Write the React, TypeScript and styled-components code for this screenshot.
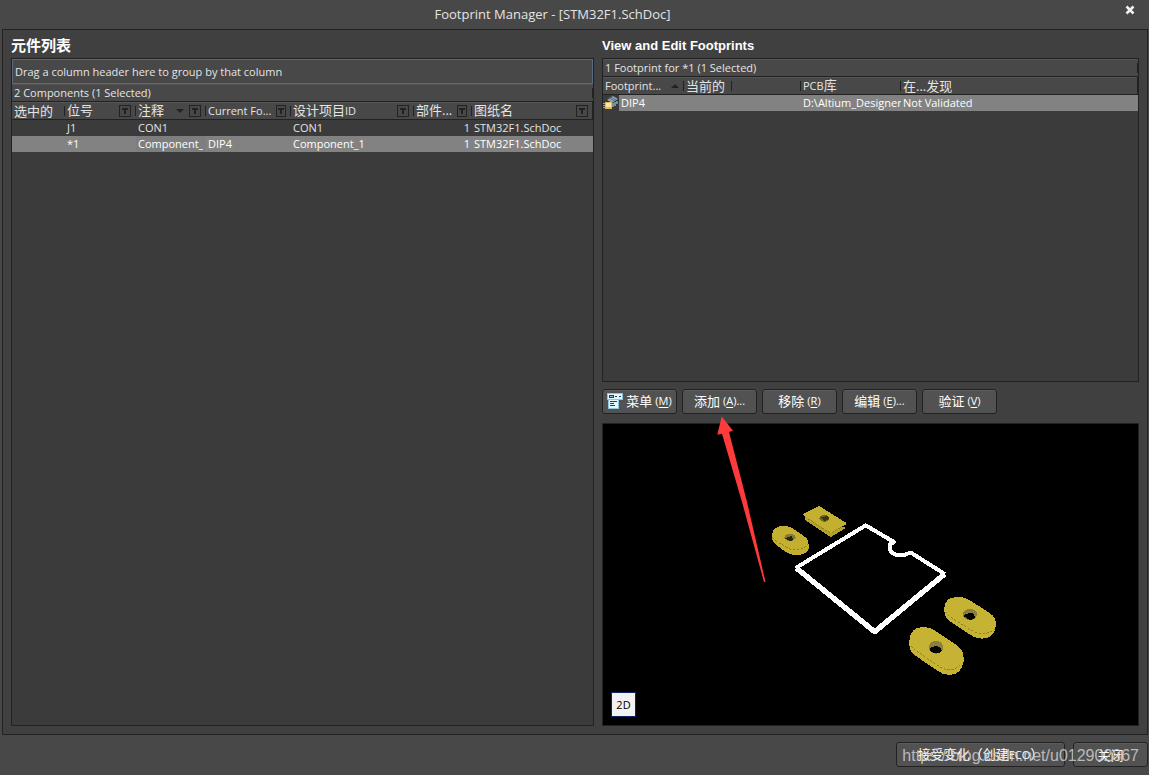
import React from "react";
import styled, { createGlobalStyle } from "styled-components";

const LINE = "#222222";
const UI = `"Open Sans", "Noto Sans CJK SC", sans-serif`;

const GlobalStyle = createGlobalStyle`
  *, *::before, *::after { box-sizing: border-box; }
  body {
    margin: 0;
    background: #484848;
    color: #e4e4e4;
    font-family: ${UI};
    font-size: 11px;
    line-height: 16px;
  }
  button { font: inherit; color: inherit; padding: 0; }
  u { text-underline-offset: 2px; }
`;

const Dialog = styled.div`
  position: relative;
  display: flex;
  flex-direction: column;
  min-height: 100vh;
`;

const TitleBar = styled.header`
  display: grid;
  grid-template-columns: 36px 1fr 38px;
  align-items: center;
  height: 29px;
  padding-bottom: 2px;
`;

const Title = styled.h1`
  margin: 0;
  padding-right: 42px;
  text-align: center;
  font-size: 13px;
  font-weight: 400;
  line-height: 18px;
`;

const CloseButton = styled.button`
  display: flex;
  align-items: center;
  justify-content: center;
  height: 20px;
  margin-bottom: 8px;
  border: 0;
  background: none;
`;

const Body = styled.main`
  flex: 1;
  display: grid;
  grid-template-columns: 583fr 537fr;
  gap: 8px;
  margin: 0 1px 0 2px;
  padding: 8px;
  border: 1px solid ${LINE};
  background: #404040;
`;

const Column = styled.section`
  display: flex;
  flex-direction: column;
  min-width: 0;
`;

const Heading = styled.h2<{ $han?: boolean }>`
  margin: 0 0 4px;
  font-family: "Liberation Sans", "Noto Sans CJK SC", sans-serif;
  font-size: ${(p) => (p.$han ? 15 : 13)}px;
  font-weight: 700;
  line-height: 16px;
  color: #ffffff;
`;

const Panel = styled.div<{ $grow: number }>`
  flex: ${(p) => p.$grow} 1 0;
  border: 1px solid ${LINE};
  background: #3b3b3b;
`;

const GroupBox = styled.div`
  height: 25px;
  padding: 4px 2px;
  border: 1px solid #586a80;
  background: #484848;
`;

const Summary = styled.div`
  height: 17px;
  padding-left: 2px;
  border-top: 1px solid #555555;
  background: linear-gradient(${LINE}, ${LINE}) no-repeat right center / 1px 10px, #484848;
`;

const Grid = styled.table`
  width: 100%;
  table-layout: fixed;
  border-collapse: separate;
  border-spacing: 0;
`;

const HeadCell = styled.th<{ $last?: boolean }>`
  height: 19px;
  padding: 0 0 0 2px;
  border-top: 1px solid ${LINE};
  border-bottom: 1px solid ${LINE};
  background: linear-gradient(${LINE}, ${LINE}) no-repeat right center / 1px ${(p) => (p.$last ? "100%" : "10px")},
    linear-gradient(#555555, #555555) no-repeat top / 100% 1px, #484848;
  font-weight: 400;
  text-align: left;
`;

const HeadContent = styled.div`
  display: flex;
  align-items: center;
  gap: 5px;
  height: 17px;
  padding-right: 5px;
  white-space: nowrap;
`;

const HeadLabel = styled.span`
  flex: 1;
`;

const Han = styled.span`
  font-size: 13px;
  font-weight: 400;
`;

const FilterButton = styled.button`
  display: flex;
  align-items: center;
  justify-content: center;
  width: 12px;
  height: 12px;
  margin-top: 1px;
  border: 1px solid ${LINE};
  background: none;
`;

const Row = styled.tr<{ $selected?: boolean }>`
  background: ${(p) => (p.$selected ? "#828282" : "transparent")};
  color: ${(p) => (p.$selected ? "#ffffff" : "#e4e4e4")};
`;

const Cell = styled.td<{ $right?: boolean; $focused?: boolean }>`
  height: 16px;
  padding: 0 ${(p) => (p.$right ? 2 : 0)}px 0 2px;
  overflow: hidden;
  white-space: nowrap;
  line-height: 16px;
  text-align: ${(p) => (p.$right ? "right" : "left")};
  background: ${(p) => (p.$focused ? "#7e7e7e" : "transparent")};
`;

const Clip = styled.div`
  margin-right: 3px;
  overflow: hidden;
`;

const IconCell = styled(Cell)`
  padding: 0;
  background: linear-gradient(#3b3b3b, #3b3b3b) no-repeat left / 16px 100%;
`;

const IconLine = styled.div`
  display: flex;
  gap: 2px;
  height: 16px;
`;

const Toolbar = styled.div`
  display: flex;
  gap: 5px;
  margin: 7px 0 9px;
`;

const PushButton = styled.button<{ $wide?: boolean }>`
  display: flex;
  align-items: center;
  justify-content: center;
  gap: 3px;
  width: ${(p) => (p.$wide ? 169 : 75)}px;
  height: 25px;
  border: 1px solid ${LINE};
  border-radius: 3px;
  background: #525252;
  box-shadow: inset 0 1px #5c5c5c;
  color: #ffffff;
  white-space: nowrap;
`;

const ButtonSlot = styled.div`
  position: relative;
`;

const Pointer = styled.svg`
  position: absolute;
  z-index: 1;
  top: 26px;
  left: 34px;
  pointer-events: none;
`;

const Preview = styled.div`
  position: relative;
  flex: 303 1 0;
  border: 1px solid ${LINE};
  background: #000000;
`;

const Scene = styled.svg`
  position: absolute;
  inset: 0;
  width: 100%;
  height: 100%;
`;

const ViewButton = styled.button`
  position: absolute;
  left: 8px;
  bottom: 8px;
  width: 25px;
  height: 25px;
  border: 1px solid #0a246a;
  background: #f2f2f2;
  color: #000000;
`;

const Footer = styled.footer`
  display: flex;
  justify-content: flex-end;
  gap: 8px;
  padding: 7px 1px 8px;
`;

const Watermark = styled.span`
  position: absolute;
  right: 10px;
  bottom: 9px;
  font-family: "Liberation Sans", sans-serif;
  font-size: 16px;
  line-height: 20px;
  color: rgba(215, 215, 215, 0.8);
  pointer-events: none;
`;

function Filter({ name }: { name: string }) {
  return (
    <FilterButton type="button" aria-label={`Filter ${name}`}>
      <svg width="6" height="6" viewBox="0 0 6 6" shapeRendering="crispEdges">
        <path d="M0 0H6V2H4V6H2V2H0Z" fill={LINE} />
      </svg>
    </FilterButton>
  );
}

function SortMark({ up }: { up?: boolean }) {
  return (
    <svg width="8" height="4" viewBox="0 0 8 4">
      <path d={up ? "M0 4L4 0L8 4Z" : "M0 0H8L4 4Z"} fill={LINE} />
    </svg>
  );
}

function MenuIcon() {
  return (
    <svg width="16" height="16" viewBox="0 0 16 16" shapeRendering="crispEdges">
      <path d="M1 5H12V16H1Z" fill="#8cc4e4" />
      <path d="M2 6H11V15H2Z" fill="#e4f6fc" />
      <path d="M0 0H16V7H0Z" fill="#8cc4e4" />
      <path d="M1 1H15V6H1Z" fill="#e4f6fc" />
      <path d="M2 2H7V5H2ZM8 3H10V4H8ZM12 3H14V4H12ZM3 8H10V9H3ZM3 10H7V11H3ZM3 12H8V13H3Z" fill="#17406e" />
      <path d="M3 3H6V4H3Z" fill="#8cc4e4" />
    </svg>
  );
}

function FootprintIcon() {
  return (
    <svg width="16" height="16" viewBox="0 0 16 16">
      <path d="M3 6L10 1L16 5V8L10 13L3 9Z" fill="#26343f" />
      <path d="M4 5L10 1L15 4L9 8Z" fill="#8fa3b6" />
      <path d="M6 3L12 6M8 2L13 5" stroke="#5f7488" />
      <path d="M10 8V12M12 7V11M14 6V9" stroke="#d4e4ec" />
      <path d="M0 8.500H3M0 10.500H3M0 12.500H3" stroke="#c89c38" />
      <path d="M2 7H9V14H2Z" fill="#e6b84e" />
      <path d="M3 8H8V12H3Z" fill="#ffe8a0" />
    </svg>
  );
}

function Pads() {
  return (
    <Scene viewBox="603 424 535 301" shapeRendering="crispEdges" aria-label="DIP4 footprint preview">
      <g transform="translate(780 490) scale(0.333333)">
        <path d="M75 83L118 60L184 108L198 114L152 141L75 90Z" fill="#b5a22a" />
        <path d="M118 48L198 98V103L152 130L70 76V72Z" fill="#c4b030" />
        <path d="M84 86L152 130L184 111" fill="none" stroke="#756a20" strokeWidth="2" strokeDasharray="8 4" />
        <ellipse cx="133" cy="85" rx="15" ry="10" fill="#706525" />
        <path d="M122 80L133 94L148 86L144 79Z" fill="#3b3510" />

        <path
          d="M-24 133C-22 114 -6 108 12 108C25 108 32 111 40 116L74 140C84 147 87 156 86 175C82 188 68 196 48 195C36 195 29 192 20 187L-12 165C-22 157 -25 146 -24 133Z"
          fill="#c3af30"
        />
        <path d="M-22 142L-12 153L26 176C44 184 68 180 84 163" fill="none" stroke="#756a20" strokeWidth="2" strokeDasharray="8 4" />
        <ellipse cx="30" cy="142" rx="17" ry="11" fill="#857a38" />
        <path d="M15 145C24 154 38 154 40 148L34 138C26 140 20 143 15 145Z" fill="#2b260a" />

        <path
          d="M493 352C493 332 510 321 532 321C549 321 559 324 570 331L628 368C643 379 648 389 648 405C647 430 632 446 606 446C594 446 586 443 577 438L508 393C496 384 492 372 493 352Z"
          fill="#c6b334"
        />
        <path d="M496 365L508 379L578 423C598 435 624 433 645 416" fill="none" stroke="#756a20" strokeWidth="2" strokeDasharray="7 5" />
        <ellipse cx="570" cy="373" rx="21" ry="17" fill="#8a7f3c" />
        <path d="M551 377C557 370 568 367 580 371L586 382C580 392 561 393 551 377Z" fill="#050500" />

        <path
          d="M388 452C388 425 406 411 428 411C446 411 456 416 466 423L529 464C547 477 552 491 551 515C546 541 532 555 508 555C494 555 483 550 472 542L402 494C390 484 387 472 388 452Z"
          fill="#c6b334"
        />
        <path d="M392 468L402 478L472 525C493 542 519 547 545 521" fill="none" stroke="#756a20" strokeWidth="2" strokeDasharray="7 5" />
        <ellipse cx="468" cy="472" rx="22" ry="19" fill="#8a7f3c" />
        <path d="M448 477C455 468 466 466 480 471L485 481C479 493 457 495 448 477Z" fill="#050500" />

        <path
          d="M47 234L257 106L342 156L330 163C325 180 335 196 364 196C380 196 382 188 393 188L494 252"
          fill="none"
          stroke="#ffffff"
          strokeWidth="12"
          strokeLinejoin="round"
        />
        <path d="M49 234L284 425L494 252" fill="none" stroke="#ffffff" strokeWidth="16" strokeLinejoin="round" />
      </g>
    </Scene>
  );
}

const components = [
  { designator: "J1", comment: "CON1", footprint: "", item: "CON1", parts: 1, sheet: "STM32F1.SchDoc", selected: false },
  { designator: "*1", comment: "Component_1", footprint: "DIP4", item: "Component_1", parts: 1, sheet: "STM32F1.SchDoc", selected: true },
];

const actions = [
  { label: "添加", mnemonic: "A", tail: "...", arrow: true },
  { label: "移除", mnemonic: "R", tail: "" },
  { label: "编辑", mnemonic: "E", tail: "..." },
  { label: "验证", mnemonic: "V", tail: "" },
];

function ComponentList() {
  return (
    <Column>
      <Heading $han lang="zh">元件列表</Heading>
      <Panel $grow={1}>
        <GroupBox>Drag a column header here to group by that column</GroupBox>
        <Summary>2 Components (1 Selected)</Summary>
        <Grid>
          <colgroup>
            <col style={{ width: 53 }} />
            <col style={{ width: 71 }} />
            <col style={{ width: 70 }} />
            <col style={{ width: 85 }} />
            <col style={{ width: 123 }} />
            <col style={{ width: 58 }} />
            <col />
          </colgroup>
          <thead>
            <tr>
              <HeadCell><HeadContent><Han>选中的</Han></HeadContent></HeadCell>
              <HeadCell><HeadContent><HeadLabel><Han>位号</Han></HeadLabel><Filter name="位号" /></HeadContent></HeadCell>
              <HeadCell><HeadContent><HeadLabel><Han>注释</Han></HeadLabel><SortMark /><Filter name="注释" /></HeadContent></HeadCell>
              <HeadCell><HeadContent><HeadLabel>Current Fo...</HeadLabel><Filter name="Current Footprint" /></HeadContent></HeadCell>
              <HeadCell><HeadContent><HeadLabel><Han>设计项目</Han>ID</HeadLabel><Filter name="设计项目ID" /></HeadContent></HeadCell>
              <HeadCell><HeadContent><HeadLabel><Han>部件...</Han></HeadLabel><Filter name="部件" /></HeadContent></HeadCell>
              <HeadCell $last><HeadContent><HeadLabel><Han>图纸名</Han></HeadLabel><Filter name="图纸名" /></HeadContent></HeadCell>
            </tr>
          </thead>
          <tbody>
            {components.map((c) => (
              <Row key={c.designator} $selected={c.selected}>
                <Cell />
                <Cell>{c.designator}</Cell>
                <Cell $focused={c.selected}><Clip>{c.comment}</Clip></Cell>
                <Cell>{c.footprint}</Cell>
                <Cell>{c.item}</Cell>
                <Cell $right>{c.parts}</Cell>
                <Cell>{c.sheet}</Cell>
              </Row>
            ))}
          </tbody>
        </Grid>
      </Panel>
    </Column>
  );
}

function FootprintEditor() {
  return (
    <Column>
      <Heading>View and Edit Footprints</Heading>
      <Panel $grow={324}>
        <Summary>1 Footprint for *1 (1 Selected)</Summary>
        <Grid>
          <colgroup>
            <col style={{ width: 81 }} />
            <col style={{ width: 48 }} />
            <col style={{ width: 69 }} />
            <col style={{ width: 100 }} />
            <col />
          </colgroup>
          <thead>
            <tr>
              <HeadCell><HeadContent><HeadLabel>Footprint...</HeadLabel><SortMark up /></HeadContent></HeadCell>
              <HeadCell><HeadContent><Han>当前的</Han></HeadContent></HeadCell>
              <HeadCell />
              <HeadCell><HeadContent><span>PCB<Han>库</Han></span></HeadContent></HeadCell>
              <HeadCell $last><HeadContent><Han>在...发现</Han></HeadContent></HeadCell>
            </tr>
          </thead>
          <tbody>
            <Row $selected>
              <IconCell><IconLine><FootprintIcon />DIP4</IconLine></IconCell>
              <Cell />
              <Cell />
              <Cell>D:\Altium_Designer</Cell>
              <Cell>Not Validated</Cell>
            </Row>
          </tbody>
        </Grid>
      </Panel>
      <Toolbar>
        <PushButton type="button">
          <MenuIcon />
          <Han>菜单</Han>
          <span>(<u>M</u>)</span>
        </PushButton>
        {actions.map((a) => (
          <ButtonSlot key={a.mnemonic}>
            <PushButton type="button">
              <Han>{a.label}</Han>
              <span>(<u>{a.mnemonic}</u>){a.tail}</span>
            </PushButton>
            {a.arrow && (
              <Pointer width="50" height="168" viewBox="0 0 50 168">
                <path d="M5.700 1.500L17 15.700L13 17L31 87L49.500 167L48 167L26 87L6 18.700L1.300 19.700Z" fill="#ff3a3a" />
              </Pointer>
            )}
          </ButtonSlot>
        ))}
      </Toolbar>
      <Preview>
        <Pads />
        <ViewButton type="button">2D</ViewButton>
      </Preview>
    </Column>
  );
}

export default function App() {
  return (
    <>
      <GlobalStyle />
      <Dialog>
        <TitleBar>
          <span />
          <Title>Footprint Manager - [STM32F1.SchDoc]</Title>
          <CloseButton type="button" aria-label="Close">
            <svg width="10" height="10" viewBox="0 0 10 10">
              <path d="M1.500 1.500L8.500 8.500M8.500 1.500L1.500 8.500" stroke="#f2f2f2" strokeWidth="2.500" />
            </svg>
          </CloseButton>
        </TitleBar>
        <Body>
          <ComponentList />
          <FootprintEditor />
        </Body>
        <Footer>
          <PushButton type="button" $wide>
            <span><Han>接受变化（创建</Han>ECO<Han>）</Han></span>
          </PushButton>
          <PushButton type="button">
            <Han>关闭</Han>
          </PushButton>
        </Footer>
        <Watermark>https://blog.csdn.net/u012902867</Watermark>
      </Dialog>
    </>
  );
}
